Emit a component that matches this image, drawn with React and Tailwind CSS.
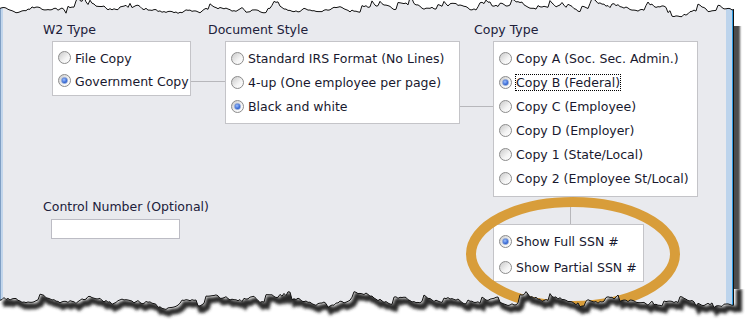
import React from 'react';

const FONT = { fontFamily: '"DejaVu Sans", Verdana, sans-serif' };

// simple seeded random so the torn edge is the same every run
function rng(seed) {
    let s = seed;
    return () => {
        s = (s * 16807) % 2147483647;
        return (s - 1) / 2147483646;
    };
}

function tornPoints(seed, x0, x1, base, amp) {
    const r = rng(seed);
    let y = base;
    const pts = [];
    for (let x = x0; x <= x1; x += 2) {
        y += (r() - 0.5) * amp;
        y += (base - y) * 0.15;
        if (r() < 0.07) y -= 2 + r() * 5;
        if (r() < 0.04) y += 2 + r() * 3;
        pts.push([x, +y.toFixed(1)]);
    }
    return pts;
}

const topPts = tornPoints(7, 0, 734, 10, 3.8);
const botPts = tornPoints(31, 0, 734, 13, 4);

const Radio = ({ checked }) => (
    <span className="relative flex w-[13px] h-[13px] shrink-0 items-center justify-center rounded-full border border-[#8c8c8c] bg-[linear-gradient(135deg,#c9c9c9,#f4f4f4_60%,#ffffff)]">
        {checked && (
            <span className="w-[7px] h-[7px] rounded-full border border-[#7f9bd4] bg-[radial-gradient(circle_at_40%_35%,#9cc0ff,#2c5fd0_70%)]" />
        )}
    </span>
);

const Option = ({ label, checked, focused, h = 'h-[24px]' }) => (
    <div className={`flex items-center ${h} pl-[5px]`}>
        <Radio checked={checked} />
        <span
            className={`ml-[3px] mt-px text-[12.5px] leading-[15px] text-[#18182e] ${focused ? 'border border-dotted border-black' : 'border border-transparent'}`}
        >
            {label}
        </span>
    </div>
);

const Label = ({ children, className = '' }) => (
    <div className={`h-[16px] text-[12.5px] leading-[16px] text-[#20203a] whitespace-nowrap ${className}`}>{children}</div>
);

export default function App() {
    return (
        <div className="relative w-[752px] h-[329px] bg-white overflow-hidden" style={FONT}>
            {/* panel */}
            <div className="flex w-[734px] h-[310px] shadow-[6px_4px_2px_rgba(0,0,0,0.7)]">
                <div className="w-[1px] bg-[#7f9fc4]" />
                <div className="w-[2px] bg-[#c2d6ec]" />
                <div className="flex-1 bg-[#e9eaee] flex pt-[22px] pl-[40px]">
                    {/* left block */}
                    <div className="flex flex-col">
                        <div className="flex items-start">
                            {/* W2 Type */}
                            <div className="flex flex-col">
                                <Label className="mb-[3px]">W2 Type</Label>
                                <div className="ml-[9px] w-[139px] border border-[#c4c4c8] bg-white pt-[4px] pb-[3px]">
                                    <Option label="File Copy" h="h-[23px]" />
                                    <Option label="Government Copy" checked h="h-[23px]" />
                                </div>
                            </div>
                            {/* Document Style */}
                            <div className="flex flex-col">
                                <Label className="mb-[3px] pl-[17px]">Document Style</Label>
                                <div className="flex items-start">
                                    <div className="mt-[40px] w-[34px] h-px bg-[#b7b7bb]" />
                                    <div className="w-[235px] border border-[#c4c4c8] bg-white pt-[4px] pb-[5px]">
                                        <Option label="Standard IRS Format (No Lines)" />
                                        <Option label="4-up (One employee per page)" />
                                        <Option label="Black and white" checked />
                                    </div>
                                </div>
                            </div>
                        </div>
                        {/* Control number */}
                        <div className="mt-[75px]">
                            <Label>Control Number (Optional)</Label>
                            <div className="mt-[4px] ml-[8px] w-[129px] h-[20px] border border-[#bcbcc4] bg-white" />
                        </div>
                    </div>
                    {/* Copy Type */}
                    <div className="flex flex-col">
                        <Label className="mb-[3px] pl-[14px]">Copy Type</Label>
                        <div className="flex items-start">
                            <div className="mt-[65px] w-[33px] h-px bg-[#b7b7bb]" />
                            <div className="flex flex-col">
                                <div className="w-[205px] border border-[#c4c4c8] bg-white pt-[4px] pb-[6px]">
                                    <Option label="Copy A (Soc. Sec. Admin.)" />
                                    <Option label="Copy B (Federal)" checked focused />
                                    <Option label="Copy C (Employee)" />
                                    <Option label="Copy D (Employer)" />
                                    <Option label="Copy 1 (State/Local)" />
                                    <Option label="Copy 2 (Employee St/Local)" />
                                </div>
                                <div className="ml-[77px] w-px h-[27px] bg-[#b7b7bb]" />
                                <div className="w-[151px] border border-[#c4c4c8] bg-white pt-[3px] pb-[1px]">
                                    <Option label="Show Full SSN #" checked h="h-[26px]" />
                                    <Option label="Show Partial SSN #" h="h-[26px]" />
                                </div>
                            </div>
                        </div>
                    </div>
                </div>
                <div className="w-[6px] bg-[#bdd4ec]" />
                <div className="w-[1px] bg-[#2f9be0]" />
                <div className="w-[1px] bg-[#111]" />
            </div>

            {/* highlight ring */}
            <svg className="absolute left-0 top-0 pointer-events-none" width="752" height="329">
                <ellipse cx="573" cy="254" rx="102" ry="52" fill="none" stroke="#d89d3a" strokeWidth="10" />
            </svg>

            {/* torn top edge */}
            <svg className="absolute left-0 top-0 pointer-events-none" width="752" height="26">
                <polygon
                    fill="#fff"
                    points={`0,0 752,0 752,26 734,26 ${[...topPts].reverse().map(p => p.join(',')).join(' ')}`}
                />
                <polyline fill="none" stroke="#111" strokeWidth="1" points={topPts.map(p => p.join(',')).join(' ')} />
                <line x1="733.5" y1={topPts[topPts.length - 1][1]} x2="733.5" y2="26" stroke="#111" />
            </svg>

            {/* torn bottom edge */}
            <svg className="absolute left-0 top-[289px] pointer-events-none" width="752" height="40">
                <defs>
                    <filter id="blur" x="-5%" y="-50%" width="110%" height="200%">
                        <feGaussianBlur stdDeviation="1.8" />
                    </filter>
                    <clipPath id="below">
                        <polygon points={`0,40 752,40 752,0 734,0 ${[...botPts].reverse().map(p => p.join(',')).join(' ')}`} />
                    </clipPath>
                </defs>
                <polygon
                    fill="#fff"
                    points={`0,40 752,40 752,0 734,0 ${[...botPts].reverse().map(p => p.join(',')).join(' ')}`}
                />
                <g clipPath="url(#below)">
                    <polyline
                        fill="none"
                        stroke="#2a2a2a"
                        strokeWidth="6"
                        filter="url(#blur)"
                        points={botPts.map(([x, y]) => `${x + 3},${y + 4}`).join(' ') + ` 739,${botPts[botPts.length - 1][1] + 4} 739,0`}
                    />
                </g>
                <polyline fill="none" stroke="#111" strokeWidth="1" points={botPts.map(p => p.join(',')).join(' ')} />
                <line x1="733.5" y1="0" x2="733.5" y2={botPts[botPts.length - 1][1]} stroke="#111" />
            </svg>
        </div>
    );
}
